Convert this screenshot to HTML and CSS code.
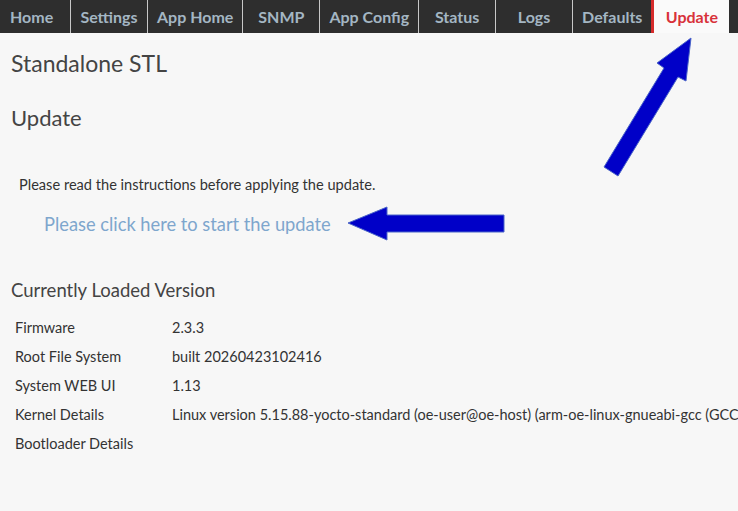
FILE: index.html
```html
<!DOCTYPE html>
<html lang="en">
<head>
  <meta charset="UTF-8" />
  <meta name="viewport" content="width=device-width, initial-scale=1.0"/>
  <title>Update</title>
  <link rel="stylesheet" href="styles.css">
</head>
<body>
  <nav class="tabs">
    <a class="tab first" href="#">Home</a>
    <a class="tab" href="#">Settings</a>
    <a class="tab" href="#">App Home</a>
    <a class="tab" href="#">SNMP</a>
    <a class="tab" href="#">App Config</a>
    <a class="tab" href="#">Status</a>
    <a class="tab" href="#">Logs</a>
    <a class="tab" href="#">Defaults</a>
    <a class="tab active" href="#">Update</a>
    <a class="tab" href="#">Help</a>
  </nav>

  <div class="content">
    <h1 class="site-title">Standalone STL</h1>
    <h2 class="page-title">Update</h2>

    <p class="intro">Please read the instructions before applying the update.</p>
    <a class="start-link" href="#">Please click here to start the update</a>

    <h3 class="version-title">Currently Loaded Version</h3>
    <div class="version-table">
      <div class="label">Firmware</div><div class="value">2.3.3</div>
      <div class="label">Root File System</div><div class="value">built 20260423102416</div>
      <div class="label">System WEB UI</div><div class="value">1.13</div>
      <div class="label">Kernel Details</div><div class="value">Linux version 5.15.88-yocto-standard (oe-user@oe-host) (arm-oe-linux-gnueabi-gcc (GCC) 11.3.0)</div>
      <div class="label">Bootloader Details</div><div class="value"></div>
    </div>
  </div>

  <!-- pointer arrows drawn over the page -->
  <svg class="arrows" width="738" height="511" viewBox="0 0 738 511">
    <polygon points="691,38 686,81 678,77 618,176 604,167 664,68 657,63" />
    <polygon points="348,223 387,207 387,215 504,215 504,232 387,232 387,240" />
  </svg>
</body>
</html>
```

FILE: styles.css
```css
html, body {
  margin: 0;
  height: 100%;
  overflow: hidden;
}
body {
  font-family: Lato, 'Noto Sans', sans-serif;
  background-color: #f7f7f7;
  color: #333;
  position: relative;
}
.tabs {
  display: flex;
  height: 33px;
  background-color: #2e2e2e;
  overflow: hidden;
}
.tab {
  flex: none;
  display: flex;
  align-items: center;
  justify-content: center;
  min-width: 77px;
  padding: 0 9px;
  box-sizing: border-box;
  border-right: 1px solid #c8c8c8;
  color: #a4b6c3;
  font-weight: bold;
  font-size: 16px;
  text-decoration: none;
  white-space: nowrap;
}
.tab.first {
  min-width: 71px;
  justify-content: flex-start;
  padding-left: 10px;
}
.tab.active {
  min-width: 78px;
  border-left: 3px solid #d52b2b;
  border-right: none;
  margin-left: -1px;
  background-color: #fafafa;
  color: #d8323a;
}
.content {
  padding: 0 11px;
}
.site-title {
  margin: 0;
  padding-top: 16px;
  font-size: 23px;
  line-height: 28px;
  font-weight: normal;
  color: #444;
}
.page-title {
  margin: 27px 0 0;
  font-size: 22px;
  line-height: 28px;
  font-weight: normal;
  color: #444;
}
.intro {
  margin: 44px 0 0;
  padding-left: 8px;
  font-size: 14.6px;
  line-height: 18px;
}
.start-link {
  display: block;
  margin-top: 18px;
  padding-left: 33px;
  font-size: 18.3px;
  line-height: 24px;
  color: #7ea6cd;
  text-decoration: none;
}
.version-title {
  margin: 42px 0 0;
  font-size: 18.5px;
  line-height: 24px;
  font-weight: normal;
  color: #444;
}
.version-table {
  display: grid;
  grid-template-columns: 157px 1fr;
  margin-top: 11px;
  font-size: 14.5px;
}
.version-table div {
  height: 29px;
  line-height: 29px;
  padding-left: 4px;
  white-space: nowrap;
}
.arrows {
  position: absolute;
  top: 0;
  left: 0;
  pointer-events: none;
}
.arrows polygon {
  fill: #0000c8;
  stroke: #4a64c8;
  stroke-width: 1;
}
```
